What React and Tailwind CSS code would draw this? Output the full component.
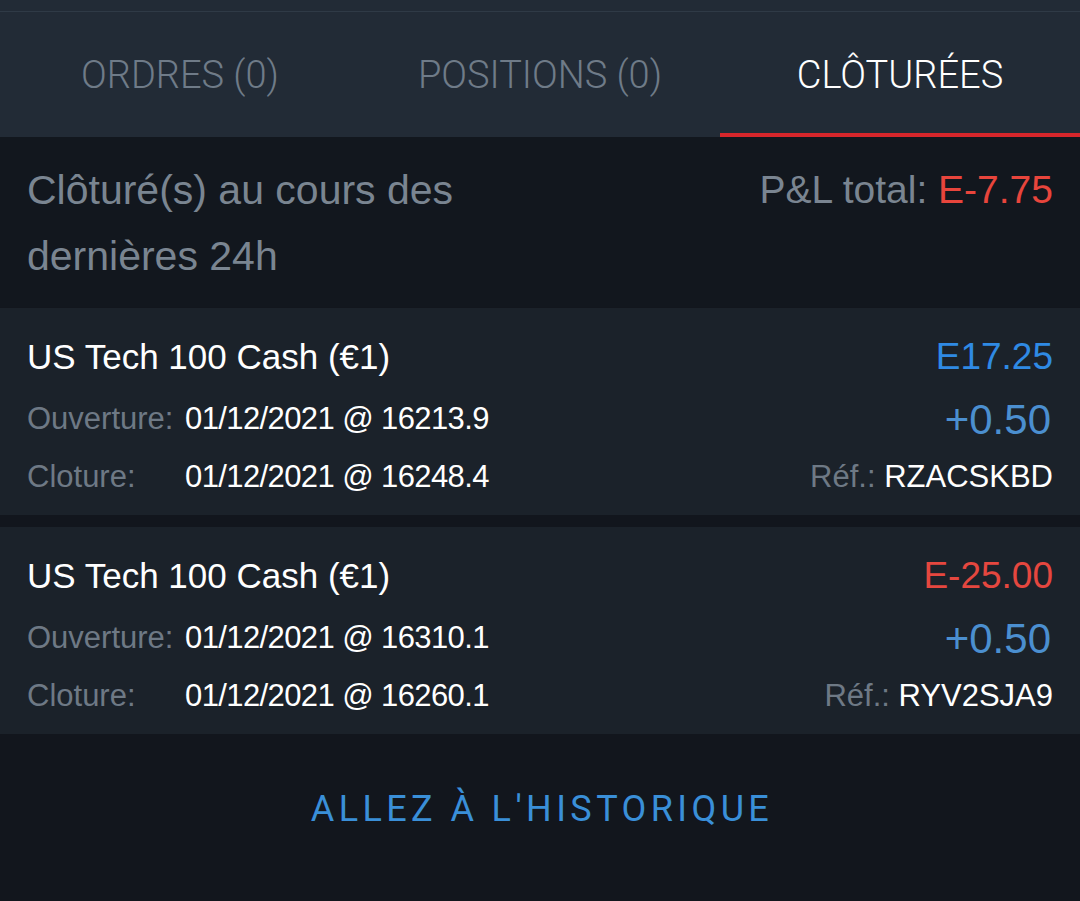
import React from "react";

const trades = [
  {
    name: "US Tech 100 Cash (€1)",
    pnl: "E17.25",
    pnlColor: "text-[#2f8ae4]",
    open: "01/12/2021 @ 16213.9",
    close: "01/12/2021 @ 16248.4",
    size: "+0.50",
    ref: "RZACSKBD",
  },
  {
    name: "US Tech 100 Cash (€1)",
    pnl: "E-25.00",
    pnlColor: "text-[#e5473f]",
    open: "01/12/2021 @ 16310.1",
    close: "01/12/2021 @ 16260.1",
    size: "+0.50",
    ref: "RYV2SJA9",
  },
];

function TradeCard({ t }) {
  return (
    <div className="bg-[#1b222a] pl-[27px] pr-[27px] pt-[26px] pb-[19px]">
      <div className="flex h-[46px] items-center justify-between">
        <span className="text-[35px] text-white">{t.name}</span>
        <span className={`text-[37px] ${t.pnlColor}`}>{t.pnl}</span>
      </div>
      <div className="flex h-[78px] items-center justify-between">
        <div className="flex items-center text-[31px]">
          <span className="w-[158px] text-[#6e7985]">Ouverture:</span>
          <span className="text-white tracking-[-0.6px]">{t.open}</span>
        </div>
        <span className="text-[42px] text-[#4b8fd0] mr-[2px]">{t.size}</span>
      </div>
      <div className="flex h-[38px] items-center justify-between">
        <div className="flex items-center text-[31px]">
          <span className="w-[158px] text-[#6e7985]">Cloture:</span>
          <span className="text-white tracking-[-0.6px]">{t.close}</span>
        </div>
        <span className="text-[31px]">
          <span className="text-[#6e7985]">Réf.: </span>
          <span className="text-white">{t.ref}</span>
        </span>
      </div>
    </div>
  );
}

export default function App() {
  return (
    <div
      className="w-[1080px] h-[901px] bg-[#12161d] flex flex-col overflow-hidden"
      style={{ fontFamily: '"Liberation Sans", Arial, sans-serif' }}
    >
      <div className="h-[11px] bg-[#222b36]" />
      <div className="h-px bg-[#2f3a46]" />
      <div
        className="grid grid-cols-3 h-[125px] bg-[#222b36]"
        style={{ fontFamily: 'Roboto, "Liberation Sans", sans-serif' }}
      >
        <div className="flex items-center justify-center pt-[2px] text-[38px] font-light text-[#6f7b88]">
          ORDRES (0)
        </div>
        <div className="flex items-center justify-center pt-[2px] text-[38px] font-light text-[#6f7b88]">
          POSITIONS (0)
        </div>
        <div className="flex items-center justify-center pt-[6px] text-[38px] font-light text-white border-b-[4px] border-[#d7262b]">
          CLÔTURÉES
        </div>
      </div>
      <div className="flex justify-between bg-[#12171e] pl-[27px] pr-[27px] pt-[20px] pb-[18px]">
        <div className="text-[41px] leading-[66px] text-[#7a8591]">
          Clôturé(s) au cours des
          <br />
          dernières 24h
        </div>
        <div className="text-[39px] leading-[66px] text-[#7a8591]">
          P&amp;L total: <span className="text-[#e8453c]">E-7.75</span>
        </div>
      </div>
      <div className="h-px bg-[#12161d]" />
      <TradeCard t={trades[0]} />
      <div className="h-[12px] bg-[#12161d]" />
      <TradeCard t={trades[1]} />
      <div
        className="flex h-[150px] items-center justify-center pl-[4px] text-[36px] tracking-[4.4px] text-[#3a8fd8]"
        style={{ fontFamily: 'Roboto, "Liberation Sans", sans-serif' }}
      >
        ALLEZ À L'HISTORIQUE
      </div>
    </div>
  );
}
